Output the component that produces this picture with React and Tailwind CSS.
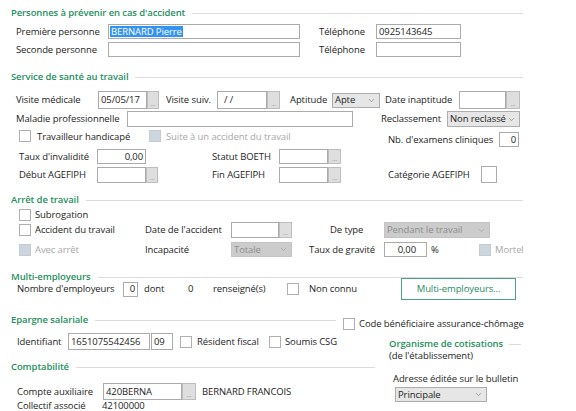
import React from "react";
import { ChevronDown } from "lucide-react";

const Section = ({ title, className = "w-[512px]" }) => (
    <div className={`flex items-center ml-[11px] h-[14px] ${className}`}>
        <span className="text-[#1f9060] font-semibold">{title}</span>
        <div className="flex-1 h-px bg-[#dcdcdc] ml-[7px]" />
    </div>
);

const Input = ({ className = "", right, children }) => (
    <div
        className={`flex items-center border border-[#ababab] bg-white px-[2px] overflow-hidden ${right ? "justify-end" : ""} ${className}`}
    >
        {children}
    </div>
);

const DotBtn = ({ className = "" }) => (
    <div
        className={`flex items-end justify-center border border-[#bdbdbd] bg-[#dedede] text-[7px] leading-[8px] text-[#9a9a9a] ${className}`}
    >
        ...
    </div>
);

const Select = ({ className = "", disabled, children }) => (
    <div
        className={`flex items-center justify-between border pl-[2px] pr-[3px] ${disabled ? "bg-[#cccccc] border-[#c4c4c4] text-[#8c8c8c]" : "bg-[#e6e6e6] border-[#adadad]"} ${className}`}
    >
        <span>{children}</span>
        <ChevronDown size={9} strokeWidth={1.5} color={disabled ? "#9a9a9a" : "#6a6a6a"} />
    </div>
);

const Check = ({ disabled, className = "" }) => (
    <div
        className={`w-[12px] h-[12px] shrink-0 border ${disabled ? "bg-[#ccd6de] border-[#c3ccd4]" : "bg-white border-[#b0b0b0]"} ${className}`}
    />
);

export default function App() {
    return (
        <div className="w-[576px] h-[411px] overflow-hidden whitespace-nowrap bg-white pt-[6px] font-['Open_Sans',sans-serif] text-[9.5px] tracking-[-0.1px] leading-none text-[#1e1e1e]">
            <Section title="Personnes à prévenir en cas d'accident" />
            <div className="mt-[4px] flex h-[15px] items-center pl-[16px]">
                <span className="w-[92px]">Première personne</span>
                <Input className="w-[192px] h-[15px] !px-[1px]">
                    <span className="bg-[#3393f0] text-white px-[1px] py-[1px]">BERNARD Pierre</span>
                </Input>
                <span className="ml-[19px] w-[57px]">Téléphone</span>
                <Input className="w-[85px] h-[15px]">0925143645</Input>
            </div>
            <div className="mt-[3px] flex h-[15px] items-center pl-[16px]">
                <span className="w-[92px]">Seconde personne</span>
                <Input className="w-[192px] h-[15px]" />
                <span className="ml-[19px] w-[57px]">Téléphone</span>
                <Input className="w-[85px] h-[15px]" />
            </div>

            <div className="mt-[13px]">
                <Section title="Service de santé au travail" />
            </div>
            <div className="mt-[7px] flex h-[18px] items-center pl-[16px]">
                <span className="w-[82px]">Visite médicale</span>
                <Input className="w-[49px] h-[18px]">05/05/17</Input>
                <DotBtn className="w-[12px] h-[18px]" />
                <span className="ml-[7px] w-[51px]">Visite suiv.</span>
                <Input className="w-[50px] h-[18px] pl-[6px]">/ /</Input>
                <DotBtn className="w-[13px] h-[18px]" />
                <span className="ml-[10px] w-[42px]">Aptitude</span>
                <Select className="w-[48px] h-[15px]">Apte</Select>
                <span className="ml-[5px] w-[74px]">Date inaptitude</span>
                <Input className="w-[47px] h-[18px]" />
                <DotBtn className="w-[14px] h-[18px]" />
            </div>
            <div className="mt-[2px] flex h-[16px] items-center pl-[16px]">
                <span className="w-[111px]">Maladie professionnelle</span>
                <Input className="w-[226px] h-[16px]" />
                <span className="ml-[28px] w-[66px]">Reclassement</span>
                <Select className="w-[73px] h-[16px]">Non reclassé</Select>
            </div>
            <div className="mt-[3px] flex h-[17px] items-start pl-[19px]">
                <Check />
                <span className="ml-[6px] mt-[2px] w-[112px]">Travailleur handicapé</span>
                <Check disabled />
                <span className="ml-[5px] mt-[2px] w-[222px] text-[#a8a8a8]">Suite à un accident du travail</span>
                <span className="mt-[5px] w-[111px]">Nb. d'examens cliniques</span>
                <Input right className="mt-[2px] w-[20px] h-[15px]">0</Input>
            </div>
            <div className="mt-[2px] flex h-[15px] items-center pl-[19px]">
                <span className="w-[78px]">Taux d'invalidité</span>
                <Input right className="w-[49px] h-[15px]">0,00</Input>
                <span className="ml-[66px] w-[67px]">Statut BOETH</span>
                <Input className="w-[49px] h-[15px]" />
                <DotBtn className="w-[13px] h-[15px]" />
            </div>
            <div className="mt-[2px] flex h-[17px] items-center pl-[19px]">
                <span className="w-[78px]">Début AGEFIPH</span>
                <Input className="w-[49px] h-[16px]" />
                <DotBtn className="w-[12px] h-[16px]" />
                <span className="ml-[54px] w-[67px]">Fin AGEFIPH</span>
                <Input className="w-[49px] h-[16px]" />
                <DotBtn className="w-[13px] h-[16px]" />
                <span className="ml-[47px] w-[93px]">Catégorie AGEFIPH</span>
                <Input className="w-[16px] h-[17px]" />
            </div>

            <div className="mt-[10px]">
                <Section title="Arrêt de travail" />
            </div>
            <div className="mt-[1px] flex h-[13px] items-center pl-[19px]">
                <Check />
                <span className="ml-[4px]">Subrogation</span>
            </div>
            <div className="mt-[1px] flex h-[16px] items-center pl-[19px]">
                <Check />
                <span className="ml-[4px] w-[110px]">Accident du travail</span>
                <span className="w-[86px]">Date de l'accident</span>
                <Input className="w-[48px] h-[16px]" />
                <DotBtn className="w-[13px] h-[16px]" />
                <span className="ml-[38px] w-[54px]">De type</span>
                <Select disabled className="w-[106px] h-[16px]">Pendant le travail</Select>
            </div>
            <div className="mt-[3px] flex h-[17px] items-center pl-[19px]">
                <Check disabled />
                <span className="ml-[4px] w-[110px] text-[#a8a8a8]">Avec arrêt</span>
                <span className="w-[86px]">Incapacité</span>
                <Select disabled className="w-[61px] h-[15px]">Totale</Select>
                <span className="ml-[17px] w-[75px]">Taux de gravité</span>
                <Input right className="w-[43px] h-[15px] pr-[10px]">0,00</Input>
                <span className="ml-[4px] w-[48px]">%</span>
                <Check disabled />
                <span className="ml-[4px] text-[#a8a8a8]">Mortel</span>
            </div>

            <div className="mt-[12px]">
                <Section title="Multi-employeurs" />
            </div>
            <div className="-mt-[6px] flex h-[22px] items-center pl-[17px]">
                <span className="w-[106px]">Nombre d'employeurs</span>
                <Input right className="w-[15px] h-[15px]">0</Input>
                <span className="ml-[6px] w-[44px]">dont</span>
                <span className="w-[25px]">0</span>
                <span className="w-[74px]">renseigné(s)</span>
                <Check />
                <span className="ml-[10px] w-[92px]">Non connu</span>
                <button className="flex h-[22px] w-[115px] items-center justify-center border border-[#4aa482] bg-white text-[#2a8a62]">
                    Multi-employeurs...
                </button>
            </div>

            <div className="mt-[13px] flex h-[14px] items-start">
                <Section title="Epargne salariale" className="w-[325px]" />
                <Check className="ml-[7px] mt-[5px]" />
                <span className="ml-[4px] mt-[6px]">Code bénéficiaire assurance-chômage</span>
            </div>

            <div className="flex">
                <div className="w-[380px]">
                    <div className="mt-[6px] flex h-[17px] items-center pl-[17px]">
                        <span className="w-[51px]">Identifiant</span>
                        <Input className="w-[82px] h-[17px]">1651075542456</Input>
                        <Input className="ml-[1px] w-[22px] h-[17px]">09</Input>
                        <Check className="ml-[7px]" />
                        <span className="ml-[5px] w-[72px]">Résident fiscal</span>
                        <Check />
                        <span className="ml-[4px]">Soumis CSG</span>
                    </div>
                    <div className="mt-[10px]">
                        <Section title="Comptabilité" className="w-[364px]" />
                    </div>
                    <div className="mt-[9px] flex h-[17px] items-center pl-[17px]">
                        <span className="w-[86px]">Compte auxiliaire</span>
                        <Input className="w-[79px] h-[17px]">420BERNA</Input>
                        <DotBtn className="w-[14px] h-[17px]" />
                        <span className="ml-[6px]">BERNARD FRANCOIS</span>
                    </div>
                    <div className="flex h-[11px] items-center pl-[17px]">
                        <span className="w-[85px]">Collectif associé</span>
                        <span>42100000</span>
                    </div>
                </div>
                <div className="ml-[9px] w-[132px] pt-[10px]">
                    <div className="flex h-[14px] items-center">
                        <span className="text-[#1f9060] font-semibold">Organisme de cotisations</span>
                        <div className="flex-1 h-px bg-[#dcdcdc] ml-[6px]" />
                    </div>
                    <div className="-mt-[1px] flex h-[12px] items-center">(de l'établissement)</div>
                    <div className="mt-[11px] flex h-[12px] items-center pl-[4px]">Adresse éditée sur le bulletin</div>
                    <Select className="mt-[2px] ml-[6px] w-[92px] h-[15px]">Principale</Select>
                </div>
            </div>
        </div>
    );
}
